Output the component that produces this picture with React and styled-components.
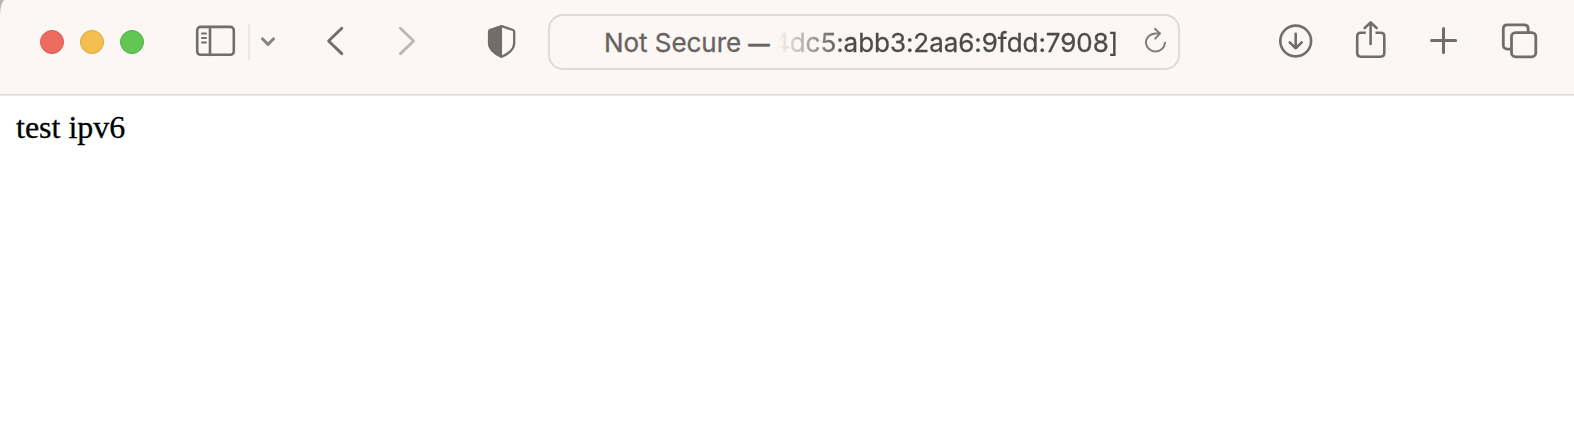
import React from "react";
import styled, { createGlobalStyle } from "styled-components";

const GlobalStyle = createGlobalStyle`
  html, body { margin: 0; background: #fff; }
  *, *::before, *::after { box-sizing: border-box; }
`;

const Window = styled.div`
  min-height: 428px;
  overflow: hidden;
  background: #ffffff;
`;

const Frame = styled.div`
  background: #b9b7b5;
`;

const Toolbar = styled.header`
  display: flex;
  align-items: center;
  height: 96px;
  padding: 0 0 11px 40px;
  background: #fcf7f4;
  border-bottom: 1px solid #ebe9ea;
  box-shadow: inset 0 -1px 0 #d8d6d7;
  border-top-left-radius: 5px 16px;
`;

const TrafficLights = styled.div`
  display: flex;
  gap: 16px;
  margin-right: 50px;
`;

const Light = styled.span`
  width: 24px;
  height: 24px;
  border-radius: 50%;
  background: ${(p) => p.$fill};
  border: 1px solid ${(p) => p.$edge};
`;

const Divider = styled.span`
  width: 2px;
  height: 36px;
  margin-left: 10px;
  background: #ece7e4;
`;

const Glyph = styled.svg`
  flex: none;
  display: block;
  width: ${(p) => p.$w}px;
  height: 48px;
  margin-left: ${(p) => p.$gap || 0}px;
  fill: none;
  stroke: ${(p) => p.$color || "#736d69"};
  stroke-width: ${(p) => p.$stroke || 2.8};
  stroke-linecap: round;
  stroke-linejoin: round;
`;

const AddressField = styled.div`
  display: flex;
  align-items: center;
  flex: none;
  width: 632px;
  height: 56px;
  margin-left: 30px;
  padding-left: 54px;
  border: 2px solid #dedad7;
  border-radius: 15px;
  font: 400 26px/32px Inter, "Liberation Sans", sans-serif;
  -webkit-text-stroke: 0.3px currentColor;
  white-space: nowrap;
`;

const Security = styled.span`
  width: 169px;
  padding-top: 2px;
  color: #666361;
  letter-spacing: -0.05px;
`;

const Dash = styled.span`
  font-size: 21.5px;
  font-weight: 600;
`;

const Address = styled.span`
  width: 347px;
  padding-top: 2px;
  color: #4c4b4a;
  letter-spacing: -0.05px;
  mask-image: linear-gradient(to right, transparent 4px, #000 72px);
`;

const Page = styled.main`
  padding: 13px 16px;
  color: #000;
  font: 32px/36px "Liberation Serif", serif;
  -webkit-text-stroke: 0.3px #000;
`;

function Icon({ w, ...rest }) {
  return <Glyph $w={w} viewBox={`0 0 ${w} 48`} aria-hidden="true" {...rest} />;
}

export default function App() {
  return (
    <Window>
      <GlobalStyle />
      <Frame>
        <Toolbar>
          <TrafficLights>
            <Light $fill="#ec6b5f" $edge="#d9584d" />
            <Light $fill="#f4bf50" $edge="#dba53c" />
            <Light $fill="#62c655" $edge="#4fb041" />
          </TrafficLights>
          <Icon w={44} $stroke={2.6}>
            <rect x="3.2" y="8.9" width="36.6" height="27.9" rx="3.4" />
            <path d="M16 9V37" />
            <path strokeWidth="1.8" d="M7.9 15.5H12M7.9 20H12M7.9 24.5H12" />
          </Icon>
          <Divider />
          <Icon w={24} $gap={6} $color="#898481" $stroke={3}>
            <path d="M6.4 20.8L12 26.4L17.6 20.8" />
          </Icon>
          <Icon w={30} $gap={40} $stroke={2.9}>
            <path d="M21.8 10.2L8.6 23L21.8 35.6" />
          </Icon>
          <Icon w={30} $gap={42} $color="#bdb8b5" $stroke={2.9}>
            <path d="M8.4 10.2L21.6 23L8.4 35.6" />
          </Icon>
          <Icon w={32} $gap={64} $stroke={2.3}>
            <path d="M15.7 8.2L27 12Q28.2 12.5 28.2 13.8V25C28.2 32 22 36 15.7 38.8C9.4 36 3.1 32 3.1 25V13.8Q3.1 12.5 4.4 12Z" />
            <path fill="#736d69" d="M14.9 8.6L4.4 12Q3.1 12.5 3.1 13.8V25C3.1 32 9 35.7 14.9 38.4Z" />
          </Icon>
          <AddressField>
            <Security>Not Secure <Dash>—</Dash></Security>
            <Address>4dc5:abb3:2aa6:9fdd:7908]</Address>
            <Icon w={32} $gap={19} $color="#827d7a" $stroke={2}>
              <path d="M20.6 15.4H16.8C10.8 15.4 6.9 19.8 6.9 24.8A9.6 9.6 0 0 0 26 24.8" />
              <path d="M16 10.8L20.9 15.5L16.2 20.6" />
            </Icon>
          </AddressField>
          <Icon w={36} $gap={98} $stroke={2.6}>
            <circle cx="17.7" cy="23" r="15.4" />
            <path d="M17.7 15.8V30.2M11.7 24.4L17.7 30.2L23.7 24.4" />
          </Icon>
          <Icon w={34} $gap={40} $stroke={2.6}>
            <path strokeLinecap="butt" d="M11.8 14.7H6.8Q3.2 14.7 3.2 18.3V35.1Q3.2 38.7 6.8 38.7H26.7Q30.3 38.7 30.3 35.1V18.3Q30.3 14.7 26.7 14.7H21.5" />
            <path d="M16.6 26V4.7M10.7 10L16.6 4.4L22.6 10" />
          </Icon>
          <Icon w={32} $gap={40} $stroke={3}>
            <path d="M3.6 22.6H27.6M15.5 10.6V34.5" />
          </Icon>
          <Icon w={40} $gap={40}>
            <path strokeLinecap="butt" d="M11.4 31.1H7.4Q3.3 31.1 3.3 27V10.8Q3.3 6.8 7.3 6.8H24.2Q28.2 6.8 28.2 10.8V14" />
            <rect x="11.5" y="14.6" width="24.3" height="24.2" rx="4" />
          </Icon>
        </Toolbar>
      </Frame>
      <Page>test ipv6</Page>
    </Window>
  );
}
